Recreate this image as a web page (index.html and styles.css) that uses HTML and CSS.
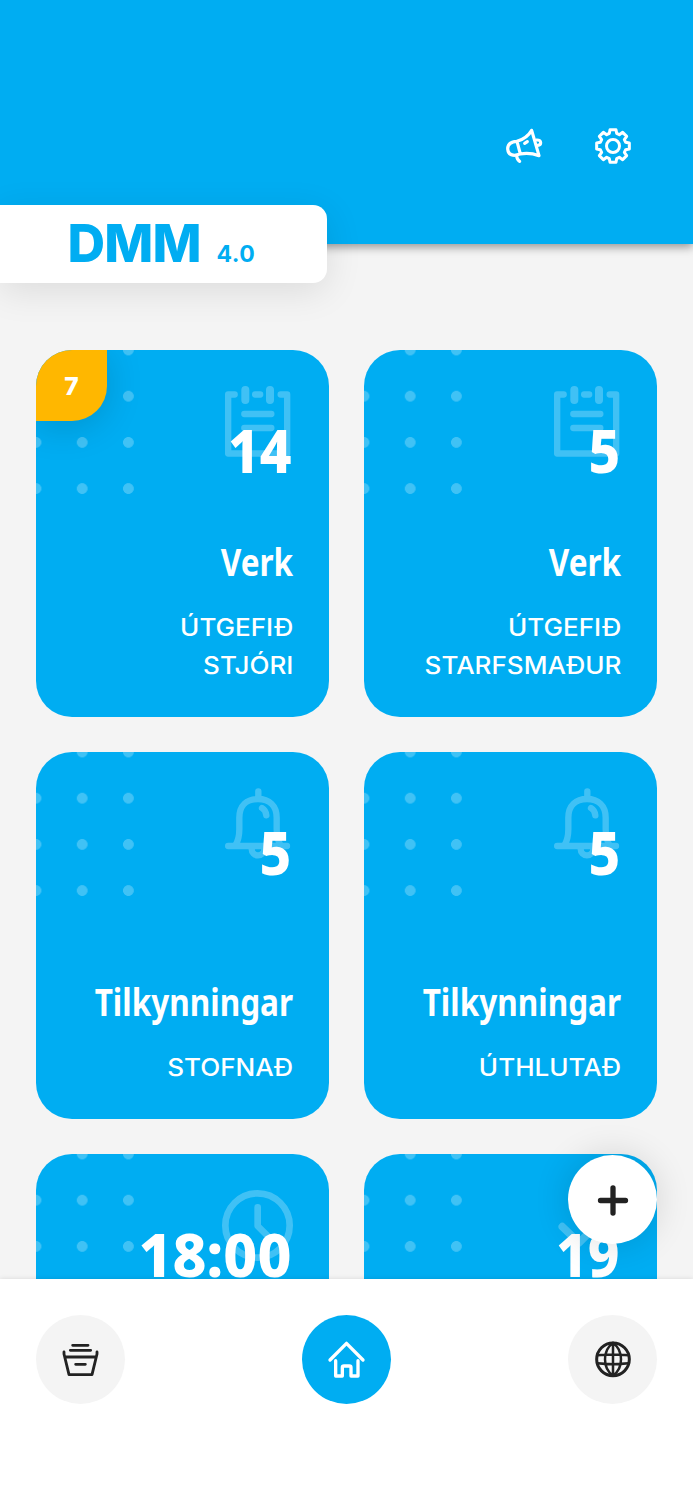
FILE: index.html
```html
<!DOCTYPE html>
<html lang="is">
<head>
  <meta charset="UTF-8" />
  <meta name="viewport" content="width=device-width, initial-scale=1.0" />
  <title>DMM 4.0</title>
  <link rel="stylesheet" href="styles.css">
</head>
<body>
  <!-- header -->
  <header class="header">
    <div class="header-actions">
      <a class="header-btn">
        <svg class="icon" viewBox="79 54 108 108" stroke-width="9.500">
          <path d="M112 94Q84 95 84 117Q86 136 105 136L122 132Q150 127 178 137L156 61Q142 85 112 94L122 132" />
          <path d="M170 90Q183 89 183 98Q183 105 174 106M135 100L143 95M111 138Q112 149 120 154" />
        </svg>
      </a>
      <a class="header-btn">
        <svg class="icon" viewBox="-54 -54 108 108" stroke-width="9">
          <circle r="19.500" />
          <path d="M-11 -38L-9 -49H9L11 -38L19 -34L29 -41L41 -29L34 -19L38 -11L49 -9V9L38 11L34 19L41 29L29 41L19 34L11 38L9 49H-9L-11 38L-19 34L-29 41L-41 29L-34 19L-38 11L-49 9V-9L-38 -11L-34 -19L-41 -29L-29 -41L-19 -34Z" />
        </svg>
      </a>
    </div>
    <div class="brand">
      <span class="brand-name">DMM</span>
      <span class="brand-version">4.0</span>
    </div>
  </header>

  <!-- cards -->
  <main class="cards">
    <a class="card">
      <span class="badge">7</span>
      <svg class="card-icon" viewBox="0 0 213 213">
        <g stroke-width="19">
          <path d="M38 25.500H18.500V202.500H195.500V25.500H176M99.500 25.500H114.500" />
          <path d="M67 84H148M67 126H148" />
          <path stroke-width="24" d="M70 12V42M144 12V42" />
        </g>
      </svg>
      <span class="count">14</span>
      <h2 class="title">Verk</h2>
      <p class="label">ÚTGEFIÐ<br>STJÓRI</p>
    </a>

    <a class="card">
      <svg class="card-icon" viewBox="0 0 213 213">
        <g stroke-width="19">
          <path d="M38 25.500H18.500V202.500H195.500V25.500H176M99.500 25.500H114.500" />
          <path d="M67 84H148M67 126H148" />
          <path stroke-width="24" d="M70 12V42M144 12V42" />
        </g>
      </svg>
      <span class="count">5</span>
      <h2 class="title">Verk</h2>
      <p class="label">ÚTGEFIÐ<br>STARFSMAÐUR</p>
    </a>

    <a class="card">
      <svg class="card-icon" viewBox="0 0 213 213">
        <g stroke-width="19">
          <path d="M109 10V32M18.500 174H195M40 172Q52 154 52 124V89C52 52 75 33 108 33S164 52 164 89V124Q164 154 176 172" />
          <path d="M89 176V183A19 19 0 0 0 127 183V176M120 60Q131 66 133 82" />
        </g>
      </svg>
      <span class="count">5</span>
      <h2 class="title">Tilkynningar</h2>
      <p class="label">STOFNAÐ</p>
    </a>

    <a class="card">
      <svg class="card-icon" viewBox="0 0 213 213">
        <g stroke-width="19">
          <path d="M109 10V32M18.500 174H195M40 172Q52 154 52 124V89C52 52 75 33 108 33S164 52 164 89V124Q164 154 176 172" />
          <path d="M89 176V183A19 19 0 0 0 127 183V176M120 60Q131 66 133 82" />
        </g>
      </svg>
      <span class="count">5</span>
      <h2 class="title">Tilkynningar</h2>
      <p class="label">ÚTHLUTAÐ</p>
    </a>

    <a class="card">
      <svg class="card-icon" viewBox="0 0 213 213">
        <g stroke-width="20">
          <circle cx="106.500" cy="106.500" r="96.500" />
          <path d="M107 52V108L145 146" />
        </g>
      </svg>
      <span class="count time">18:00</span>
    </a>

    <a class="card">
      <svg class="card-icon" viewBox="0 0 213 213">
        <g stroke-width="23">
          <path d="M34 110L84 158L180 62" />
        </g>
      </svg>
      <span class="count">19</span>
    </a>
  </main>

  <!-- bottom navigation -->
  <nav class="tabbar">
    <a class="fab">
      <svg class="icon" viewBox="0 0 36 36" stroke-width="5.300">
        <path d="M18 6V31M5.500 18.500H30.500" />
      </svg>
    </a>
    <a class="tab">
      <svg class="icon" viewBox="98 125 108 108" stroke-width="8.500">
        <path d="M127 135H173M120 150H181M136 192H165" />
        <path d="M101 155V161L116 223H185L200 161V155M103 170H198" />
      </svg>
    </a>
    <a class="tab active">
      <svg class="icon" viewBox="117 125 108 108" stroke-width="10">
        <path d="M120 179L169.500 129L219 179M137 181V227H157V202Q157 197 162 197H178Q183 197 183 202V227H204V181" />
      </svg>
    </a>
    <a class="tab">
      <svg class="icon" viewBox="105 125 108 108" stroke-width="9">
        <circle cx="159" cy="177" r="49" />
        <path stroke-width="7.500" d="M159 128V226M159 128C127 150 127 204 159 226M159 128C191 150 191 204 159 226M112 165Q159 160 206 165M112 189Q159 194 206 189" />
      </svg>
    </a>
  </nav>
</body>
</html>
```

FILE: styles.css
```css
* {
  margin: 0;
  padding: 0;
  box-sizing: border-box;
}

body {
  display: flex;
  flex-direction: column;
  height: 100vh;
  overflow: hidden;
  background: #f4f4f4;
  font-family: Inter, "Liberation Sans", sans-serif;
}

.icon {
  width: 36px;
  height: 36px;
  overflow: visible;
  fill: none;
  stroke: currentColor;
  stroke-linecap: round;
  stroke-linejoin: round;
}

/* header */
.header {
  position: relative;
  z-index: 1;
  flex: none;
  height: 243.500px;
  padding: 101px 36px 0;
  background: #00adf2;
  box-shadow: 0 3px 9px rgba(0, 0, 0, 0.4);
}

.header-actions {
  display: flex;
  justify-content: flex-end;
  color: #fff;
}

.header-btn {
  display: flex;
  align-items: center;
  justify-content: center;
  width: 89px;
  height: 89px;
}

/* white tab hanging over the header edge */
.brand {
  position: absolute;
  left: 0;
  bottom: -39px;
  display: flex;
  align-items: baseline;
  width: 326.500px;
  height: 78px;
  padding-left: 67.500px;
  border-radius: 0 14px 14px 0;
  background: #fff;
  color: #00adf2;
  box-shadow: 0 8px 36px rgba(0, 0, 0, 0.1);
}

.brand-name {
  width: 149px;
  font-size: 52px;
  font-weight: 800;
  line-height: 77px;
  letter-spacing: -0.800px;
}

.brand-version {
  font-size: 23px;
  font-weight: 700;
  letter-spacing: 0.500px;
}

/* cards */
.cards {
  flex: 1;
  min-height: 0;
  overflow: hidden;
  display: grid;
  grid-template-columns: 1fr 1fr;
  grid-auto-rows: 366.500px;
  gap: 35.700px;
  padding: 106.500px 36px 0;
}

.card {
  position: relative;
  display: flex;
  flex-direction: column;
  align-items: flex-end;
  padding: 64.500px 35.500px 32.500px;
  border-radius: 36px;
  overflow: hidden;
  background: #00adf2;
  color: #fff;
  text-align: right;
}

/* dotted corner */
.card::before {
  content: "";
  position: absolute;
  top: 0;
  left: 0;
  width: 98px;
  height: 145px;
  background: radial-gradient(circle, rgba(255, 255, 255, 0.25) 5px, transparent 5.700px) -23.100px -23.100px / 46.200px 46.200px;
}

.badge {
  position: absolute;
  top: 0;
  left: 0;
  width: 71px;
  height: 71px;
  border-radius: 0 0 35px 0;
  background: #ffb700;
  box-shadow: 0 6px 36px rgba(0, 0, 0, 0.15);
  font-size: 24.500px;
  font-weight: 800;
  line-height: 72px;
  text-align: center;
}

.card-icon {
  position: absolute;
  top: 35.500px;
  right: 35.500px;
  width: 71px;
  height: 71px;
  opacity: 0.25;
  fill: none;
  stroke: #fff;
  stroke-linecap: round;
  stroke-linejoin: round;
}

.count {
  position: relative;
  margin-right: 1.500px;
  margin-bottom: auto;
  font-family: "Noto Sans", "Open Sans", sans-serif;
  font-size: 61px;
  font-weight: 800;
  line-height: 70px;
  transform: scaleX(0.9);
  transform-origin: right;
}

.count.time {
  transform: scaleX(0.965);
}

.title {
  margin-bottom: 21px;
  font-family: "Noto Sans", "Open Sans", sans-serif;
  font-size: 38px;
  font-weight: 700;
  line-height: 54px;
  transform: scaleX(0.83);
  transform-origin: right;
}

.label {
  font-size: 24px;
  font-weight: 500;
  line-height: 37.500px;
  transform: scaleX(1.085);
  transform-origin: right;
}

/* bottom navigation */
.tabbar {
  position: relative;
  z-index: 1;
  flex: none;
  display: flex;
  justify-content: space-between;
  height: 221px;
  padding: 36px;
  background: #fff;
  box-shadow: 0 0 5px rgba(0, 0, 0, 0.12);
}

.tab,
.fab {
  display: flex;
  align-items: center;
  justify-content: center;
  width: 89px;
  height: 89px;
  border-radius: 50%;
  background: #f4f4f4;
  color: #222;
}

.tab.active {
  background: #00adf2;
  color: #fff;
}

.fab {
  position: absolute;
  right: 36px;
  bottom: 256px;
  background: #fff;
  box-shadow: 0 0 36px rgba(0, 0, 0, 0.14);
}
```
